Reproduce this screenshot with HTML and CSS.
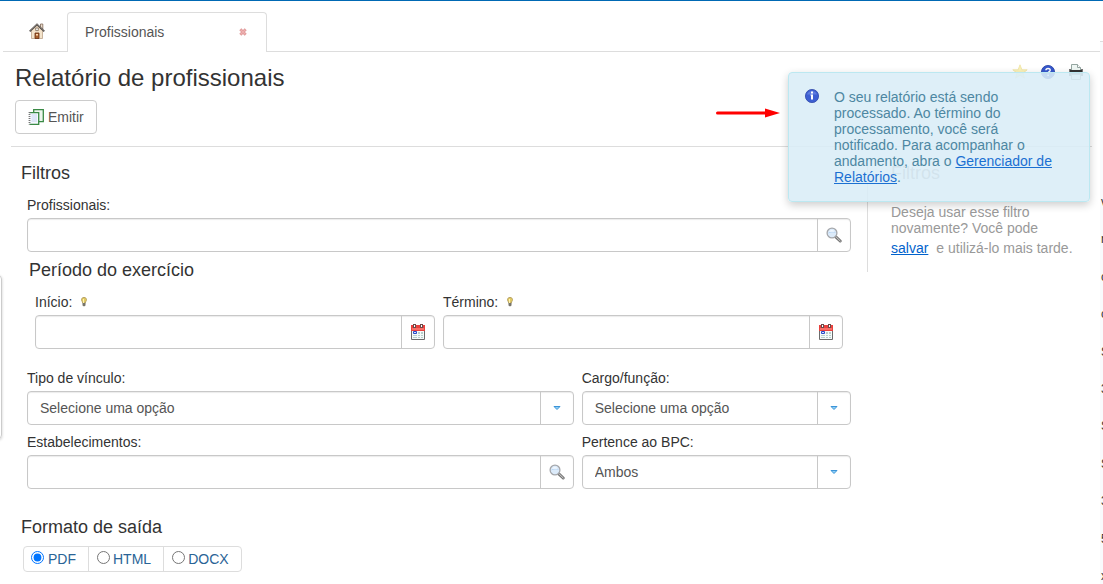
FILE: index.html
```html
<!DOCTYPE html>
<html lang="pt-BR">
<head>
<meta charset="utf-8">
<meta name="viewport" content="width=device-width, initial-scale=1">
<title>Relatório de profissionais</title>
<link rel="stylesheet" href="styles.css">
</head>
<body>
<svg class="sprite" width="0" height="0" aria-hidden="true">
  <defs>
    <symbol id="i-search" viewBox="0 0 16 16">
      <path d="M9.800 9.800l4.400 4.200" stroke="#777" stroke-width="3" stroke-linecap="round"/>
      <path d="M10.400 10.200l3.800 3.700" stroke="#d2d2d2" stroke-width="1" stroke-linecap="round"/>
      <circle cx="6" cy="6" r="4.900" fill="#dcebfa" stroke="#a5a7ab" stroke-width="1.300"/>
      <path d="M2.600 6c1-1.400 5.600-1.400 6.800-.6" stroke="#b4d4f4" fill="none"/>
      <path d="M3 4.800a3.300 3.300 0 0 1 5.800 0z" fill="#f3f9ff"/>
    </symbol>
    <symbol id="i-calendar" viewBox="0 0 16 16">
      <path d="M1.500 3v12.500h13V3z" fill="#f4fafa" stroke="#6b6b6b"/>
      <path d="M1 1h14v6H1z" fill="#e8413d"/>
      <path d="M2 4h12v2H2z" fill="#fa6d66"/>
      <path d="M3 0h3v4H3zM10 0h3v4h-3z" fill="#6a4a4a"/>
      <path d="M4 1h1v2H4zM11 1h1v2h-1z" fill="#fff"/>
      <path d="M8 8h2v2H8zM11 8h2v2h-2zM3 11h4v1H3zM8 11h2v1H8zM11 11h2v1h-2zM3 13h4v1H3zM8 13h2v1H8zM11 13h2v1h-2z" fill="#b8cfcb"/>
      <path d="M3.500 7.500h3v2h-3z" fill="#cfdcff" stroke="#2748c8"/>
    </symbol>
    <symbol id="i-bulb" viewBox="0 0 6 10">
      <path d="M3 .5C1.200.5.500 1.600.500 2.700c0 1.200 1 1.700 1.200 3.300h2.600c.2-1.600 1.200-2.100 1.200-3.300C5.500 1.600 4.800.5 3 .5z" fill="#e2ca62" stroke="#b5a062"/>
      <path d="M2 2h1v4H2z" fill="#fff3ae"/>
      <path d="M1.500 6h3v2.500L3 9.500 1.500 8.500z" fill="#77746a"/>
    </symbol>
    <symbol id="i-caret" viewBox="0 0 8 6">
      <path d="M1 1.500h6L4 4.500z" fill="#8fd0f6" stroke="#3b94d8" stroke-linejoin="round"/>
    </symbol>
  </defs>
</svg>

<nav class="tabs" aria-label="Abas">
  <a class="home" href="#" aria-label="Início">
    <svg width="16" height="16" viewBox="0 0 16 16">
      <path d="M11.500 1h2.300v5h-2.300z" fill="#efe0cf" stroke="#7d6656" stroke-width=".8"/>
      <path d="M2.500 7.500L8 2.500l5.500 5v8h-11z" fill="#f3e3cb" stroke="#b49a7e" stroke-width=".7"/>
      <path d="M.7 8.300L8 1.400l7.300 6.900" fill="none" stroke="#4f4a48" stroke-width="1.700"/>
      <path d="M1.200 7.500L8 1.100l6.800 6.400" fill="none" stroke="#a09890" stroke-width=".6"/>
      <path d="M6.700 5h2.600v2.600H6.700z" fill="#fff" stroke="#7a6452" stroke-width=".8"/>
      <path d="M6 10h4v5.500H6z" fill="#a8602f" stroke="#683013" stroke-width=".8"/>
      <path d="M7 11h2v1.500H7z" fill="#ffd9ad"/>
    </svg>
  </a>
  <div class="tab">
    <span>Profissionais</span>
    <button class="close" type="button" aria-label="Fechar">
      <svg width="8" height="8" viewBox="0 0 8 8"><path d="M1.300 1.300l5.400 5.400M6.700 1.300L1.300 6.700" stroke="#dd9595" stroke-width="2.800"/><path d="M1.500 1.500l5 5M6.500 1.500l-5 5" stroke="#eeb0b0" stroke-width="1.200"/></svg>
    </button>
  </div>
</nav>

<main class="page">
  <header class="head">
    <div class="head-row">
      <h1>Relatório de profissionais</h1>
      <div class="tools">
        <button type="button" aria-label="Favorito">
          <svg width="16" height="16" viewBox="0 0 16 16"><path d="M8 .8l1.900 5h5.300l-4.200 3.300 1.600 5.200L8 11.200l-4.600 3.100L5 9.100.8 5.800h5.300z" fill="#fbf3bb" stroke="#efe2a0" stroke-width=".8"/></svg>
        </button>
        <button type="button" aria-label="Ajuda">
          <svg width="16" height="16" viewBox="0 0 16 16"><circle cx="8" cy="8" r="6.600" fill="#3557cc" stroke="#2440a5" stroke-width=".8"/><path d="M5.900 6.300C6 4 10.200 4 10.200 6.200c0 1.500-2.100 1.500-2.100 3.100M8.100 10.600v1.500" fill="none" stroke="#fff" stroke-width="1.500"/></svg>
        </button>
        <button type="button" aria-label="Imprimir">
          <svg width="16" height="16" viewBox="0 0 16 16"><path d="M3.500.5h6l3 3v3h-9z" fill="#eef6f3" stroke="#94a5a0"/><path d="M9.500.5v3h3" fill="#fff" stroke="#94a5a0"/><path d="M1 5h2v1h10V5h2v7H1z" fill="#777"/><path d="M2 6h12v2H2z" fill="#333"/><path d="M3.500 10.500h9v5h-9z" fill="#eef6ee" stroke="#909c90"/></svg>
        </button>
      </div>
    </div>
    <button class="emit" type="button">
      <svg width="16" height="16" viewBox="0 0 16 16"><path d="M5.700.7h9.600v12H5.700z" fill="#edf6ee" stroke="#3a8a46" stroke-width="1.300"/><path d="M1.500 3.700h9.200v11.600H1.500" fill="#f5f9ff" stroke="#3a8a46" stroke-width="1.300"/><path d="M1.500 3v12.500" stroke="#777" stroke-width="1.800" stroke-dasharray="1 1"/><path d="M3.500 6h5.500M3.500 8h5.500M3.500 10h5.500M3.500 12h5.500" stroke="#c7d4f0"/></svg>
      <span>Emitir</span>
    </button>
  </header>

  <div class="content">
    <form class="form">
      <h2>Filtros</h2>
      <div class="cell full">
        <label for="prof">Profissionais:</label>
        <div class="field">
          <input id="prof" type="text">
          <button type="button" aria-label="Pesquisar profissionais"><svg width="16" height="16"><use href="#i-search"/></svg></button>
        </div>
      </div>

      <fieldset class="period">
        <legend>Período do exercício</legend>
        <div class="dates">
          <div class="date">
            <div class="label-row"><label for="ini">Início:</label><svg width="6" height="10"><use href="#i-bulb"/></svg></div>
            <div class="field">
              <input id="ini" type="text">
              <button type="button" aria-label="Escolher início"><svg width="16" height="16"><use href="#i-calendar"/></svg></button>
            </div>
          </div>
          <div class="date">
            <div class="label-row"><label for="fim">Término:</label><svg width="6" height="10"><use href="#i-bulb"/></svg></div>
            <div class="field">
              <input id="fim" type="text">
              <button type="button" aria-label="Escolher término"><svg width="16" height="16"><use href="#i-calendar"/></svg></button>
            </div>
          </div>
        </div>
      </fieldset>

      <div class="grid">
        <div class="cell">
          <label for="tipo">Tipo de vínculo:</label>
          <div class="field">
            <select id="tipo"><option>Selecione uma opção</option></select>
            <span class="addon"><svg width="8" height="6"><use href="#i-caret"/></svg></span>
          </div>
        </div>
        <div class="cell">
          <label for="cargo">Cargo/função:</label>
          <div class="field">
            <select id="cargo"><option>Selecione uma opção</option></select>
            <span class="addon"><svg width="8" height="6"><use href="#i-caret"/></svg></span>
          </div>
        </div>
        <div class="cell">
          <label for="estab">Estabelecimentos:</label>
          <div class="field">
            <input id="estab" type="text">
            <button type="button" aria-label="Pesquisar estabelecimentos"><svg width="16" height="16"><use href="#i-search"/></svg></button>
          </div>
        </div>
        <div class="cell">
          <label for="bpc">Pertence ao BPC:</label>
          <div class="field">
            <select id="bpc"><option>Ambos</option></select>
            <span class="addon"><svg width="8" height="6"><use href="#i-caret"/></svg></span>
          </div>
        </div>
      </div>

      <fieldset class="output">
        <legend>Formato de saída</legend>
        <div class="formats">
          <label><input type="radio" name="formato" checked>PDF</label>
          <label><input type="radio" name="formato">HTML</label>
          <label><input type="radio" name="formato">DOCX</label>
        </div>
      </fieldset>
    </form>

    <aside class="saved">
      <h2>Filtros</h2>
      <p>Deseja usar esse filtro novamente? Você pode</p>
      <p class="save-line"><a href="#">salvar</a> <span>e utilizá-lo mais tarde.</span></p>
    </aside>
  </div>
</main>

<div class="notice" role="status">
  <svg class="pointer" width="64" height="10" viewBox="0 0 64 10" aria-hidden="true"><path d="M1.500 5H52" stroke="#f00" stroke-width="3" stroke-linecap="round"/><path d="M49 .5L64 5 49 9.500z" fill="#f00"/></svg>
  <div class="alert">
    <svg width="16" height="16" viewBox="0 0 16 16" aria-hidden="true"><circle cx="8" cy="7" r="6.600" fill="#3d5fd2" stroke="#3049aa" stroke-width=".8"/><path d="M3 5.500a5.300 5.300 0 0 1 10 0z" fill="#7f9aea" opacity=".5"/><path d="M7 2.500h2v2H7zM6.500 5.500H9v5H7v-4h-.5z" fill="#fff"/></svg>
    <p>O seu relatório está sendo processado. Ao término do processamento, você será notificado. Para acompanhar o andamento, abra o <a href="#">Gerenciador de Relatórios</a>.</p>
  </div>
</div>

<div class="drawer" aria-hidden="true"></div>
<div class="behind" aria-hidden="true">
  <span>v</span><span>r</span><span>c</span><span>c</span><span>S</span><span>3</span><span>S</span><span>S</span><span>3</span><span>5</span><span>x</span>
</div>
</body>
</html>
```
FILE: styles.css
```css
* {
  box-sizing: border-box;
}

body {
  margin: 0;
  min-height: 100vh;
  overflow-x: hidden;
  position: relative;
  border-top: 1px solid #0069b4;
  background: #fff;
  color: #333;
  font: 14px/16px "Liberation Sans", Arial, sans-serif;
}

button,
input,
select {
  margin: 0;
  font: inherit;
  color: #555;
}

h1,
h2,
p,
fieldset {
  margin: 0;
}

fieldset {
  min-width: 0;
  padding: 0;
  border: 0;
}

h2,
legend {
  padding: 0;
  font-size: 18px;
  font-weight: normal;
  line-height: 20px;
}

a {
  color: #0062cc;
}

svg {
  display: block;
  flex: none;
}

.sprite {
  position: absolute;
}

/* Tabs */
.tabs {
  display: flex;
  margin: 0 3px;
  padding-top: 11px;
  box-shadow: inset 0 -1px #ddd;
}

.home {
  width: 64px;
  padding: 11px 26px;
}

.tab {
  display: flex;
  align-items: center;
  justify-content: space-between;
  width: 200px;
  height: 40px;
  padding: 0 18px 2px 17px;
  border: 1px solid #ddd;
  border-bottom: 0;
  border-radius: 4px 4px 0 0;
  background: #fff;
  color: #555;
}

.close,
.tools button {
  padding: 0;
  border: 0;
  background: none;
}

.close {
  padding: 1px;
}

/* Heading */
.page {
  padding: 12px 11px;
}

.head {
  padding: 0 4px 12px;
  border-bottom: 1px solid #ddd;
}

.head-row {
  display: flex;
  justify-content: space-between;
  align-items: flex-start;
}

h1 {
  font-size: 24px;
  font-weight: normal;
  line-height: 28px;
}

.tools {
  display: flex;
  gap: 12px;
  padding-right: 4px;
}

.emit {
  display: flex;
  align-items: center;
  gap: 4px;
  height: 34px;
  margin-top: 8px;
  padding: 0 12px;
  border: 1px solid #ccc;
  border-radius: 4px;
  background: #fff;
}

/* Form */
.content {
  display: grid;
  grid-template-columns: minmax(0, 1fr) 225px;
  align-items: start;
}

.form {
  padding: 16px 12px 0 10px;
}

.cell {
  padding: 0 4px;
}

.form > .cell,
.grid,
.period {
  margin-left: 2px;
}

.full {
  margin-top: 14px;
}

.cell > label,
.label-row {
  display: flex;
  align-items: center;
  gap: 9px;
  margin-bottom: 5px;
}

.field {
  display: flex;
  height: 34px;
  border: 1px solid #c8c8c8;
  border-radius: 4px;
  background: #fff;
  box-shadow: inset 0 1px 1px rgba(0, 0, 0, 0.08);
}

.field input,
.field select {
  flex: 1;
  min-width: 0;
  padding: 0 12px;
  border: 0;
  background: transparent;
  appearance: none;
}

.field button,
.addon {
  display: flex;
  align-items: center;
  justify-content: center;
  width: 33px;
  padding: 0;
  border: 0;
  border-left: 1px solid #c8c8c8;
  background: none;
}

.period {
  margin-top: 8px;
  padding: 0 12px;
}

.period legend {
  margin-left: -6px;
}

.dates {
  display: grid;
  grid-template-columns: 1fr 1fr;
  gap: 8px;
  padding-top: 14px;
}

.grid {
  display: grid;
  grid-template-columns: 2fr 1fr;
  row-gap: 9px;
  margin-top: 21px;
}

.output {
  margin-top: 28px;
}

.formats {
  display: flex;
  width: fit-content;
  margin: 9px 0 0 2px;
  border: 1px solid #ddd;
  border-radius: 4px;
  color: #2a6496;
}

.formats label {
  display: flex;
  align-items: center;
  gap: 3px;
  height: 24px;
  padding: 0 12px 0 8px;
}

.formats label:first-child {
  gap: 4px;
  padding-left: 7px;
}

.formats label + label {
  border-left: 1px solid #ddd;
}

.formats input {
  width: 13px;
  height: 13px;
  margin-bottom: 3px;
}

/* Saved filters */
.saved {
  margin-top: 16px;
  padding: 0 0 16px 23px;
  border-left: 1px solid #ddd;
  color: #999;
}

.saved h2 {
  margin-bottom: 21px;
}

.saved .save-line {
  display: flex;
  gap: 8px;
  margin-top: 4px;
}

/* Notification */
.notice {
  position: absolute;
  top: 71px;
  right: 13px;
  display: flex;
  align-items: flex-start;
  gap: 8px;
}

.pointer {
  margin-top: 36px;
}

.alert {
  display: flex;
  gap: 14px;
  width: 302px;
  padding: 16px 32px 16px 15px;
  border: 1px solid #bce8f1;
  border-radius: 4px;
  background: rgba(217, 237, 247, 0.88);
  box-shadow: 0 3px 8px rgba(0, 0, 0, 0.2);
  color: #4d87a2;
}

.alert a {
  color: #1b70d2;
}

/* Neighbouring panels at the window edges */
.drawer {
  position: absolute;
  top: 274px;
  left: -8px;
  width: 10px;
  height: 164px;
  border: 1px solid #ccc;
  border-radius: 4px;
  box-shadow: 0 1px 3px rgba(0, 0, 0, 0.2);
}

.behind {
  position: absolute;
  top: 40px;
  right: 0;
  bottom: 0;
  display: flex;
  flex-direction: column;
  justify-content: space-between;
  width: 3px;
  padding: 152px 0 0 1px;
  overflow: hidden;
  border-top: 1px solid #ddd;
  background: #f9fafc;
  font-size: 12px;
}
```
